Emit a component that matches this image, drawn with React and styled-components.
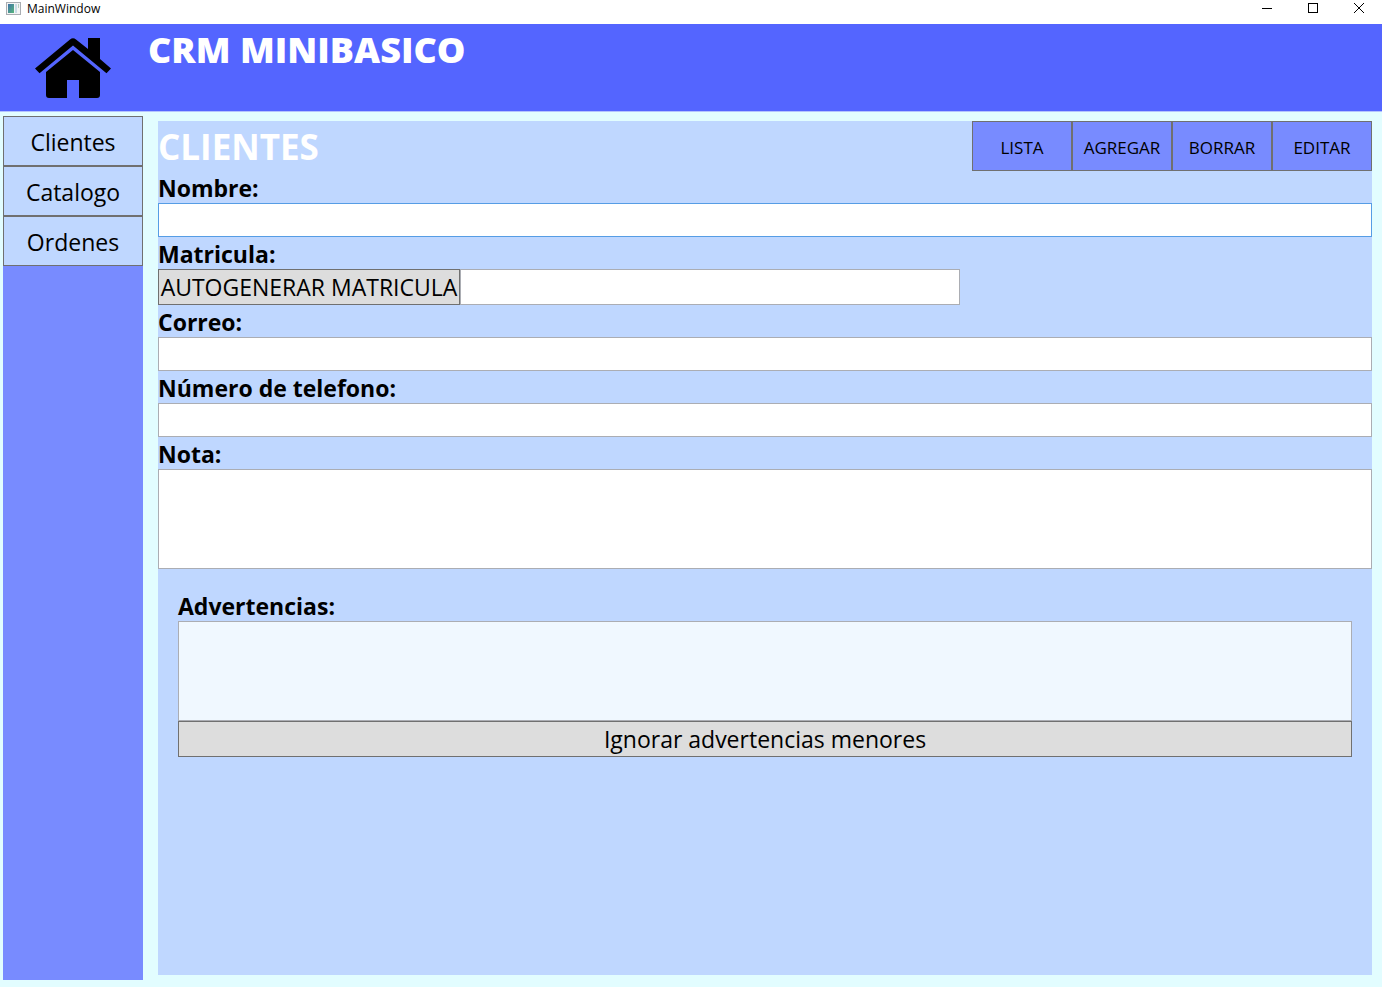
import React from "react";
import styled, { createGlobalStyle } from "styled-components";

const GlobalStyle = createGlobalStyle`
  *, *::before, *::after { box-sizing: border-box; }
  body { margin: 0; background: #e2fdff; color: #000; }
  body, button, input, textarea { font-family: "Segoe UI", "Open Sans", "Noto Sans", sans-serif; }
`;

const Window = styled.div`
  min-height: 100vh;
  display: flex;
  flex-direction: column;
`;

const TitleBar = styled.div`
  height: 24px;
  display: flex;
  align-items: flex-start;
  background: #fff;
`;

const AppIcon = styled.svg`
  width: 15px;
  height: 13px;
  margin: 2px 6px 0;
`;

const WindowTitle = styled.span`
  flex: 1;
  font-size: 12px;
  line-height: 18px;
`;

const WindowButton = styled.button`
  width: 46px;
  height: 16px;
  padding: 0;
  border: 0;
  background: transparent;
  display: flex;
  align-items: center;
  justify-content: center;
`;

const Header = styled.header`
  height: 88px;
  display: flex;
  background: #5465ff;
  border-bottom: 1px solid #b4c3ff;
`;

const HomeButton = styled.button`
  width: 148px;
  padding: 13px 0 0 35px;
  border: 0;
  background: transparent;
  display: flex;
  align-items: flex-start;
`;

const AppTitle = styled.h1`
  margin: 0;
  color: #fff;
  font-size: 36px;
  line-height: 52px;
  font-weight: 800;
`;

const Body = styled.div`
  flex: 1;
  display: flex;
  gap: 15px;
  padding: 4px 10px 7px 3px;
`;

const Sidebar = styled.nav`
  width: 140px;
  flex: none;
  display: flex;
  flex-direction: column;
  background: #788bff;
`;

const Button = styled.button`
  margin: 0;
  padding: 0;
  border: 1px solid #707070;
  background: #ddd;
  color: #000;
  font-size: 23px;
  line-height: 34px;
`;

const NavButton = styled(Button)`
  height: 50px;
  background: #bfd7ff;
  padding-top: 1px;
`;

const Main = styled.main`
  flex: 1;
  min-width: 0;
  margin: 5px 0;
  background: #bfd7ff;
`;

const Toolbar = styled.div`
  height: 50px;
  display: flex;
  justify-content: space-between;
`;

const PageTitle = styled.h2`
  margin: 0;
  color: #fff;
  font-size: 35px;
  line-height: 52px;
  font-weight: 700;
`;

const Actions = styled.div`
  display: flex;
`;

const ActionButton = styled(Button)`
  width: 100px;
  background: #788bff;
  font-size: 17px;
  padding-top: 3px;
`;

const Field = styled.div`
  display: flex;
  flex-direction: column;
`;

const Label = styled.label`
  padding-top: 2px;
  font-size: 23px;
  line-height: 30px;
  font-weight: 700;
`;

const TextInput = styled.input`
  width: 100%;
  height: 34px;
  padding: 0 4px;
  border: 1px solid ${(p) => (p.$active ? "#569de5" : "#abadb3")};
  border-radius: 0;
  background: #fff;
  font-size: 23px;
  outline: none;
`;

const TextArea = styled.textarea`
  display: block;
  width: 100%;
  height: 100px;
  margin: 0;
  padding: 0 4px;
  border: 1px solid #abadb3;
  border-radius: 0;
  background: ${(p) => (p.$tinted ? "#f0f8ff" : "#fff")};
  font-size: 23px;
  resize: none;
  outline: none;
`;

const MatriculaRow = styled.div`
  height: 36px;
  display: flex;
`;

const GenerateButton = styled(Button)`
  width: 302px;
  flex: none;
  white-space: nowrap;
`;

const MatriculaInput = styled(TextInput)`
  height: 36px;
  max-width: 500px;
`;

const Form = styled.form``;

const Warnings = styled.section`
  display: flex;
  flex-direction: column;
  padding: 20px;
`;

function HomeIcon() {
  return (
    <svg width="76" height="62" viewBox="35 37 76 62" aria-hidden="true">
      <path d="M35 68.5 L70 39.5 Q73 37 76 39.5 L88 49 V38 H100 V59 L111 68.5 L106.5 73.2 L73 45.5 L39.5 73.2 Z" />
      <path d="M73 50 L100 72 V95 Q100 98 97 98 H79 V80 H67 V98 H49 Q46 98 46 95 V72 Z" />
    </svg>
  );
}

const sections = ["Clientes", "Catalogo", "Ordenes"];
const actions = ["LISTA", "AGREGAR", "BORRAR", "EDITAR"];

export default function App() {
  return (
    <Window>
      <GlobalStyle />
      <TitleBar>
        <AppIcon viewBox="0 0 15 13" aria-hidden="true">
          <defs>
            <linearGradient id="pane" x1="0" y1="0" x2="1" y2="1">
              <stop offset="0" stopColor="#3f74a8" />
              <stop offset="1" stopColor="#57b57c" />
            </linearGradient>
          </defs>
          <rect x="0.5" y="0.5" width="14" height="12" fill="#f4f4f4" stroke="#a9adb2" />
          <rect x="2" y="2" width="6" height="9" fill="url(#pane)" />
          <rect x="9" y="2" width="2" height="9" fill="#c9dce6" />
          <rect x="12" y="2" width="1" height="4" fill="#b9cfc0" />
        </AppIcon>
        <WindowTitle>MainWindow</WindowTitle>
        <WindowButton aria-label="Minimizar">
          <svg width="10" height="10"><path d="M0 5.5H10" stroke="#000" /></svg>
        </WindowButton>
        <WindowButton aria-label="Maximizar">
          <svg width="10" height="10"><rect x="0.5" y="0.5" width="9" height="9" fill="none" stroke="#000" /></svg>
        </WindowButton>
        <WindowButton aria-label="Cerrar">
          <svg width="10" height="10"><path d="M0 0L10 10M10 0L0 10" stroke="#000" /></svg>
        </WindowButton>
      </TitleBar>
      <Header>
        <HomeButton aria-label="Inicio"><HomeIcon /></HomeButton>
        <AppTitle>CRM MINIBASICO</AppTitle>
      </Header>
      <Body>
        <Sidebar>
          {sections.map((name) => <NavButton key={name}>{name}</NavButton>)}
        </Sidebar>
        <Main>
          <Toolbar>
            <PageTitle>CLIENTES</PageTitle>
            <Actions>
              {actions.map((name) => <ActionButton key={name}>{name}</ActionButton>)}
            </Actions>
          </Toolbar>
          <Form onSubmit={(e) => e.preventDefault()}>
            <Field>
              <Label htmlFor="nombre">Nombre:</Label>
              <TextInput id="nombre" $active />
            </Field>
            <Field>
              <Label htmlFor="matricula">Matricula:</Label>
              <MatriculaRow>
                <GenerateButton type="button">AUTOGENERAR MATRICULA</GenerateButton>
                <MatriculaInput id="matricula" />
              </MatriculaRow>
            </Field>
            <Field>
              <Label htmlFor="correo">Correo:</Label>
              <TextInput id="correo" type="email" />
            </Field>
            <Field>
              <Label htmlFor="telefono">Número de telefono:</Label>
              <TextInput id="telefono" type="tel" />
            </Field>
            <Field>
              <Label htmlFor="nota">Nota:</Label>
              <TextArea id="nota" />
            </Field>
            <Warnings>
              <Label htmlFor="advertencias">Advertencias:</Label>
              <TextArea id="advertencias" readOnly $tinted />
              <Button type="button">Ignorar advertencias menores</Button>
            </Warnings>
          </Form>
        </Main>
      </Body>
    </Window>
  );
}
